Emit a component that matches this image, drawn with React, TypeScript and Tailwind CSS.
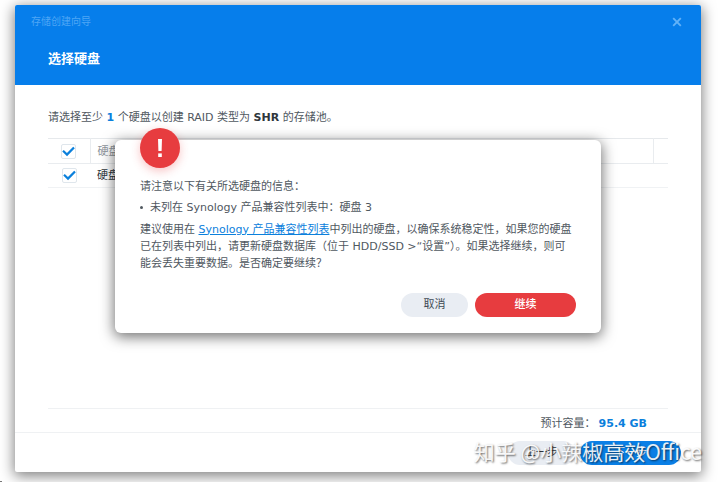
import { useState } from "react";

const disks = [{ id: 3, name: "硬盘 3" }];

type CheckProps = {
  label: string;
  checked: boolean;
  onChange: () => void;
};

function Check({ label, checked, onChange }: CheckProps) {
  return (
    <label className="mx-auto grid w-[15px] place-items-center">
      <input
        type="checkbox"
        aria-label={label}
        checked={checked}
        onChange={onChange}
        className="col-start-1 row-start-1 h-[15px] w-[15px] appearance-none rounded-xs border border-[#dfe6ec] bg-white"
      />
      {checked && (
        <svg className="pointer-events-none col-start-1 row-start-1" width="13" height="13" viewBox="0 0 13 13" fill="none">
          <path d="M1 5.8L5 9.6L12 2.4" stroke="#0b80dc" strokeWidth="2.2" />
        </svg>
      )}
    </label>
  );
}

export default function App() {
  const [selected, setSelected] = useState([3]);
  const allSelected = selected.length === disks.length;

  const toggle = (id: number) =>
    setSelected((prev) => (prev.includes(id) ? prev.filter((d) => d !== id) : [...prev, id]));

  return (
    <div className="relative flex min-h-screen flex-col overflow-hidden bg-white pt-[5px] pr-[19px] pb-[10px] pl-[15px] font-['DejaVu_Sans','Noto_Sans_CJK_SC',sans-serif] text-[11px] leading-[17px] text-[#50585f]">
      <div className="relative flex flex-1 flex-col rounded-xs bg-white shadow-[0_3px_14px_1px_rgba(0,0,0,0.5)]">

        {/* ── HEADER ── */}
        <header className="h-20 rounded-t-xs bg-[#067eeb] pr-[18px] pl-4">
          <div className="flex items-center justify-between pt-2 text-[10px] text-[#4fa6f5]">
            <span>存储创建向导</span>
            <button type="button" aria-label="关闭" className="p-px">
              <svg width="10" height="10" viewBox="0 0 10 10" fill="none">
                <path d="M1.2 1.2L8.8 8.8M8.8 1.2L1.2 8.8" stroke="#62b2f8" strokeWidth="1.9" />
              </svg>
            </button>
          </div>
          <h1 className="pt-5 pl-[17px] text-[13px] font-bold text-white">选择硬盘</h1>
        </header>

        {/* ── DISK LIST ── */}
        <main className="flex flex-1 flex-col px-[33px] pt-6">
          <p className="mb-3">
            请选择至少 <b className="text-[#0b80dc]">1</b> 个硬盘以创建 RAID 类型为 <b className="text-[#2f363c]">SHR</b> 的存储池。
          </p>
          <table className="w-full table-fixed border-collapse border-t border-[#e6e9ec] text-left">
            <thead>
              <tr className="h-[25px] border-b border-[#e9ecef]">
                <th className="w-[42px]">
                  <Check label="全选" checked={allSelected} onChange={() => setSelected(allSelected ? [] : disks.map((d) => d.id))} />
                </th>
                <th className="border-l border-[#e9ecef] pl-[7px] font-normal text-[#8f969c]">硬盘</th>
                <th className="w-[15px] border-l border-[#e9ecef]" />
              </tr>
            </thead>
            <tbody>
              {disks.map((disk) => (
                <tr key={disk.id} className="h-6 border-b border-[#f0f2f4]">
                  <td>
                    <Check label={disk.name} checked={selected.includes(disk.id)} onChange={() => toggle(disk.id)} />
                  </td>
                  <td className="pl-[7px] text-[#30373d]">{disk.name}</td>
                  <td />
                </tr>
              ))}
            </tbody>
          </table>

          <div className="mt-auto flex h-6 items-end justify-end gap-[3px] border-t border-[#eff1f3] pr-[21px]">
            <span>预计容量：</span>
            <b className="text-[#0b80dc]">95.4 GB</b>
          </div>
        </main>

        {/* ── FOOTER ── */}
        <footer className="flex h-10 items-center justify-end gap-[5px] border-t border-[#eff1f3] pr-5">
          <button type="button" className="h-6 w-[67px] rounded-full bg-[#e9edf3] text-[#30373d]">上一步</button>
          <button type="button" className="h-6 w-[101px] rounded-full bg-[#0a7fe6] text-white">下一步</button>
        </footer>

        {/* ── WARNING DIALOG ── */}
        <div className="absolute inset-0 flex items-center justify-center pb-[5px]">
          <div role="alertdialog" aria-labelledby="warning-title" className="relative w-[486px] rounded-md bg-white px-[25px] pt-[38px] pb-4 shadow-[0_3px_14px_1px_rgba(0,0,0,0.55)]">
            <div className="absolute -top-3 left-[25px] flex h-10 w-10 items-center justify-center rounded-full bg-[#e73c3f] shadow-[0_3px_10px_rgba(231,60,63,0.3)]">
              <svg width="4" height="18" viewBox="0 0 4 18" fill="#fff">
                <path d="M0 0H4L3.6 12H0.4Z" />
                <rect x="0.2" y="14.4" width="3.6" height="3.6" />
              </svg>
            </div>
            <p id="warning-title" className="mb-1">请注意以下有关所选硬盘的信息：</p>
            <ul className="mb-[5px] list-none">
              <li className="flex items-center gap-[7px]">
                <span className="h-[3px] w-[3px] rounded-full bg-[#50585f]" />
                未列在 Synology 产品兼容性列表中：硬盘 3
              </li>
            </ul>
            <p>
              建议使用在 <a href="#compatibility" className="text-[#0b80dc] underline">Synology 产品兼容性列表</a>中列出的硬盘，以确保系统稳定性，如果您的硬盘已在列表中列出，请更新硬盘数据库（位于 HDD/SSD &gt;“设置”）。如果选择继续，则可能会丢失重要数据。是否确定要继续？
            </p>
            <div className="mt-[21px] flex justify-end gap-[7px]">
              <button type="button" className="h-6 w-[67px] rounded-full bg-[#e9edf3] text-[#414b55]">取消</button>
              <button type="button" className="h-6 w-[101px] rounded-full bg-[#e73c3f] font-medium text-white">继续</button>
            </div>
          </div>
        </div>
      </div>

      <div className="pointer-events-none absolute right-[18px] bottom-[15px] font-['Noto_Sans_CJK_SC',sans-serif] text-[21px] leading-8 whitespace-nowrap text-white/90 [text-shadow:1px_1px_2px_rgba(0,0,0,0.6)]">
        知乎 @小辣椒高效Office
      </div>
      <div className="absolute bottom-0 left-0 h-px w-0.5 bg-[#777]" />
    </div>
  );
}
